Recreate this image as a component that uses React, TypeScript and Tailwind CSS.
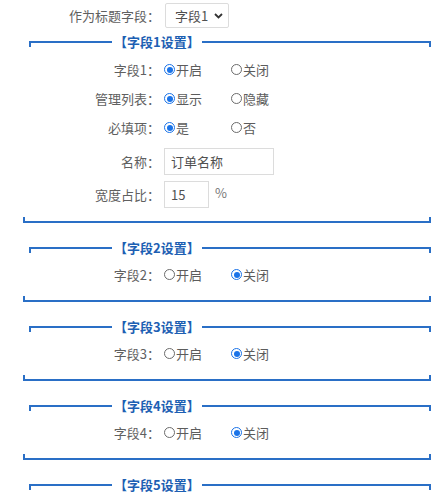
import React from 'react';

const FONT = '"Noto Sans CJK SC", "Microsoft YaHei", "Noto Sans", sans-serif';

const Radio = ({ checked, label }: { checked: boolean; label: string }) => (
  <span className="inline-flex w-[67px] items-center">
    {checked ? (
      <span className="flex h-[11px] w-[11px] items-center justify-center rounded-full border-[1.5px] border-[#1a73e8] bg-white">
        <span className="h-[6px] w-[6px] rounded-full bg-[#1a73e8]" />
      </span>
    ) : (
      <span className="h-[11px] w-[11px] rounded-full border border-[#6b6b6b] bg-white" />
    )}
    <span className="ml-[1px] text-[#5c5c5c]">{label}</span>
  </span>
);

const Row = ({ label, className, children }: { label: string; className: string; children: React.ReactNode }) => (
  <div className={`flex items-center ${className}`}>
    <div className="w-[160px] text-right text-[#606060]">{label}</div>
    <div className="ml-[4px] flex items-center">{children}</div>
  </div>
);

const Legend = ({ title }: { title: string }) => (
  <div className="ml-[29px] flex h-[14px] w-[402px] items-start">
    <div className="mt-[6px] h-[6px] w-[83px] border-l-2 border-t-2 border-[#2a6fc6]" />
    <div className="px-[2px] text-[13px] font-bold leading-[14px] text-[#1d5fb3]">{title}</div>
    <div className="mt-[6px] h-[6px] flex-1 border-r-2 border-t-2 border-[#2a6fc6]" />
  </div>
);

const Closer = ({ className }: { className: string }) => (
  <div className={`ml-[23px] h-[6px] w-[408px] border-x-2 border-b-2 border-[#2a6fc6] ${className}`} />
);

const SimpleSection = ({ n }: { n: number }) => (
  <div className="mt-[18px]">
    <Legend title={`【字段${n}设置】`} />
    <Row label={`字段${n}：`} className="mt-[5px] h-[29px]">
      <Radio checked={false} label="开启" />
      <Radio checked={true} label="关闭" />
    </Row>
    <Closer className="mt-[7px]" />
  </div>
);

export default function App() {
  return (
    <div className="h-[500px] w-[443px] overflow-hidden bg-white text-[13px]" style={{ fontFamily: FONT }}>
      <div className="flex h-[31px] items-center">
        <div className="w-[160px] text-right text-[#606060]">作为标题字段：</div>
        <div className="ml-[5px] flex h-[25px] w-[64px] items-center justify-between rounded-[2px] border border-[#dcdcdc] pl-[9px] pr-[5px] text-[#505050]">
          <span>字段1</span>
          <svg width="9" height="6" viewBox="0 0 9 6" fill="none">
            <path d="M1 1l3.5 3.5L8 1" stroke="#333" strokeWidth="1.8" />
          </svg>
        </div>
      </div>

      <div className="mt-[4px]">
        <Legend title="【字段1设置】" />
        <Row label="字段1：" className="mt-[6px] h-[29px]">
          <Radio checked={true} label="开启" />
          <Radio checked={false} label="关闭" />
        </Row>
        <Row label="管理列表：" className="h-[29px]">
          <Radio checked={true} label="显示" />
          <Radio checked={false} label="隐藏" />
        </Row>
        <Row label="必填项：" className="h-[29px]">
          <Radio checked={true} label="是" />
          <Radio checked={false} label="否" />
        </Row>
        <Row label="名称：" className="mt-[3px] h-[33px]">
          <div className="flex h-[27px] w-[110px] items-center border border-[#dcdcdc] px-[6px] text-[#505050]">订单名称</div>
        </Row>
        <Row label="宽度占比：" className="h-[33px]">
          <div className="flex h-[27px] w-[45px] items-center border border-[#dcdcdc] px-[6px] text-[#505050]">15</div>
          <span className="ml-[6px] -mt-[3px] text-[#777]">%</span>
        </Row>
        <Closer className="mt-[6px]" />
      </div>

      <SimpleSection n={2} />
      <SimpleSection n={3} />
      <SimpleSection n={4} />
      <div className="mt-[18px]">
        <Legend title="【字段5设置】" />
      </div>
    </div>
  );
}
